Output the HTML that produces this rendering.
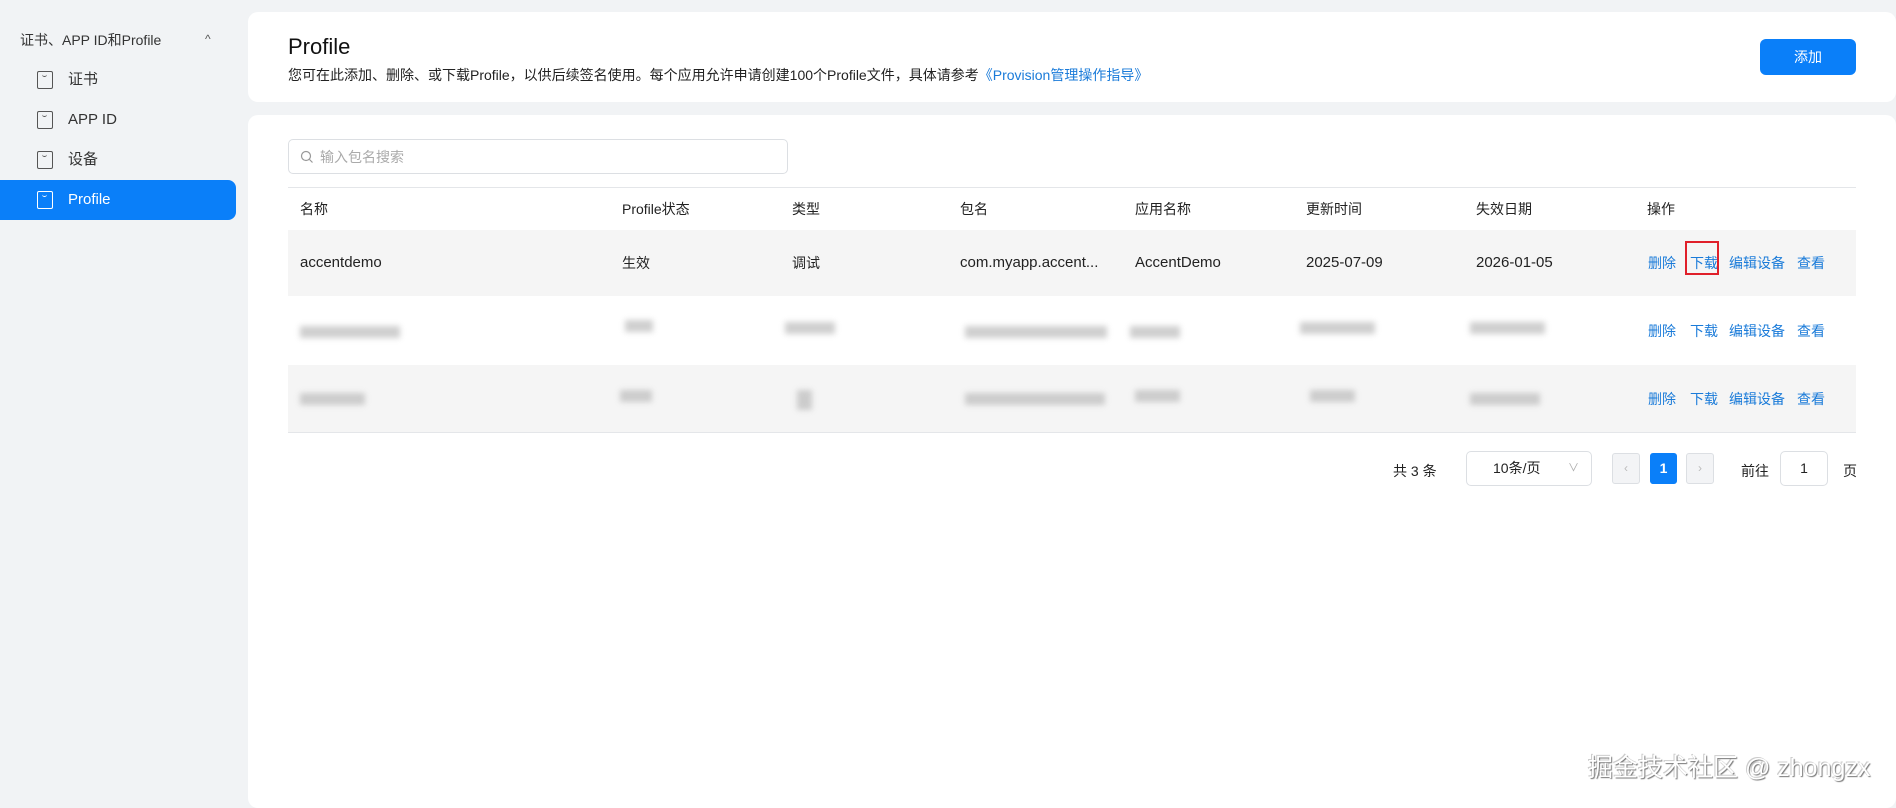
<!DOCTYPE html>
<html><head><meta charset="utf-8"><style>
*{box-sizing:border-box;margin:0;padding:0}
body{width:1896px;height:808px;background:#f1f3f5;font-family:"Liberation Sans","Noto Sans CJK SC",sans-serif;color:#222;position:relative;overflow:hidden}
.sh{position:absolute;left:20px;top:30px;font-size:14px;color:#333}
.caret{position:absolute;left:205px;top:32px;font-size:12px;color:#555}
.it{position:absolute;left:0;width:236px;height:40px;font-size:15px;color:#333}
.it .ic{position:absolute;left:37px;top:11px;width:16px;height:18px;border:1.5px solid #555;border-radius:2px}
.it .ic:after{content:"";position:absolute;left:4px;top:1px;width:5px;height:3px;border-bottom:1.2px solid #555;border-radius:0 0 4px 4px}
.it span{position:absolute;left:68px;top:0;line-height:40px}
.act{background:#0a7ff9;color:#fff;border-radius:0 8px 8px 0}
.act .ic{border-color:#fff}.act .ic:after{border-color:#fff}
.c1{position:absolute;left:248px;top:12px;width:1648px;height:90px;background:#fff;border-radius:10px}
.c2{position:absolute;left:248px;top:115px;width:1648px;height:693px;background:#fff;border-radius:10px}
.a{position:absolute}
.t{position:absolute;font-size:14px;white-space:nowrap;line-height:20px}
.r1{top:253px}.r2{top:321px}.r3{top:389px}
.blue{color:#1a7bd9}
.blur{position:absolute;background:#bbb;filter:blur(3px);opacity:.7;height:12px}
</style></head><body>
<div class="sh">证书、APP ID和Profile</div><div class="caret">^</div>
<div class="it" style="top:60px"><div class="ic"></div><span>证书</span></div>
<div class="it" style="top:100px"><div class="ic"></div><span>APP ID</span></div>
<div class="it" style="top:140px"><div class="ic"></div><span>设备</span></div>
<div class="it act" style="top:180px"><div class="ic"></div><span>Profile</span></div>
<div class="c1"></div><div class="c2"></div>
<div class="t" style="left:288px;top:34px;font-size:22px;line-height:26px;color:#111">Profile</div>
<div class="t" style="left:288px;top:65px;font-size:14px;color:#222">您可在此添加、删除、或下载Profile，以供后续签名使用。每个应用允许申请创建100个Profile文件，具体请参考<span class="blue">《Provision管理操作指导》</span></div>
<div class="a" style="left:1760px;top:39px;width:96px;height:36px;background:#0a7ff9;border-radius:6px;color:#fff;font-size:14px;text-align:center;line-height:36px">添加</div>
<div class="a" style="left:288px;top:139px;width:500px;height:35px;border:1px solid #dcdfe3;border-radius:5px"></div>
<svg class="a" style="left:300px;top:150px" width="14" height="14"><circle cx="6" cy="6" r="4.5" fill="none" stroke="#999" stroke-width="1.2"/><line x1="9.5" y1="9.5" x2="12.5" y2="12.5" stroke="#999" stroke-width="1.2"/></svg>
<div class="t" style="left:320px;top:147px;font-size:14px;color:#aaa">输入包名搜索</div>
<div class="a" style="left:288px;top:187px;width:1568px;height:1px;background:#e4e6e9"></div>
<div class="a" style="left:288px;top:230px;width:1568px;height:66px;background:#f5f5f5"></div>
<div class="a" style="left:288px;top:365px;width:1568px;height:67px;background:#f5f5f5"></div>
<div class="a" style="left:288px;top:432px;width:1568px;height:1px;background:#e4e6e9"></div>
<div class="t" style="left:300px;top:199px">名称</div>
<div class="t" style="left:622px;top:199px">Profile状态</div>
<div class="t" style="left:792px;top:199px">类型</div>
<div class="t" style="left:960px;top:199px">包名</div>
<div class="t" style="left:1135px;top:199px">应用名称</div>
<div class="t" style="left:1306px;top:199px">更新时间</div>
<div class="t" style="left:1476px;top:199px">失效日期</div>
<div class="t" style="left:1647px;top:199px">操作</div>
<div class="t r1" style="left:300px;font-size:15px">accentdemo</div>
<div class="t r1" style="left:622px">生效</div>
<div class="t r1" style="left:792px">调试</div>
<div class="t r1" style="left:960px;font-size:15px">com.myapp.accent...</div>
<div class="t r1" style="left:1135px;font-size:15px">AccentDemo</div>
<div class="t r1" style="left:1306px;font-size:15px">2025-07-09</div>
<div class="t r1" style="left:1476px;font-size:15px">2026-01-05</div>
<div class="t blue r1" style="left:1648px">删除</div>
<div class="t blue r1" style="left:1690px">下载</div>
<div class="a" style="left:1685px;top:241px;width:34px;height:34px;border:2px solid #e0202a"></div>
<div class="t blue r1" style="left:1729px">编辑设备</div>
<div class="t blue r1" style="left:1797px">查看</div>
<div class="t blue r2" style="left:1648px">删除</div><div class="t blue r2" style="left:1690px">下载</div><div class="t blue r2" style="left:1729px">编辑设备</div><div class="t blue r2" style="left:1797px">查看</div>
<div class="t blue r3" style="left:1648px">删除</div><div class="t blue r3" style="left:1690px">下载</div><div class="t blue r3" style="left:1729px">编辑设备</div><div class="t blue r3" style="left:1797px">查看</div>
<div class="blur" style="left:300px;top:326px;width:100px"></div>
<div class="blur" style="left:625px;top:320px;width:28px"></div>
<div class="blur" style="left:785px;top:322px;width:50px"></div>
<div class="blur" style="left:965px;top:326px;width:142px"></div>
<div class="blur" style="left:1130px;top:326px;width:50px"></div>
<div class="blur" style="left:1300px;top:322px;width:75px"></div>
<div class="blur" style="left:1470px;top:322px;width:75px"></div>
<div class="blur" style="left:300px;top:393px;width:65px"></div>
<div class="blur" style="left:620px;top:390px;width:32px"></div>
<div class="blur" style="left:797px;top:390px;width:15px;height:20px"></div>
<div class="blur" style="left:965px;top:393px;width:140px"></div>
<div class="blur" style="left:1135px;top:390px;width:45px"></div>
<div class="blur" style="left:1310px;top:390px;width:45px"></div>
<div class="blur" style="left:1470px;top:393px;width:70px"></div>
<div class="t" style="left:1393px;top:461px">共 3 条</div>
<div class="a" style="left:1466px;top:451px;width:126px;height:35px;border:1px solid #dcdfe3;border-radius:5px;font-size:14px;line-height:33px;padding-left:26px">10条/页<span style="position:absolute;right:12px;color:#aaa;font-size:11px">∨</span></div>
<div class="a" style="left:1612px;top:453px;width:28px;height:31px;border:1px solid #dcdfe3;background:#f3f4f6;border-radius:3px;color:#bbb;font-size:12px;text-align:center;line-height:29px">‹</div>
<div class="a" style="left:1650px;top:453px;width:27px;height:31px;background:#0a7ff9;border-radius:3px;color:#fff;font-weight:bold;font-size:14px;text-align:center;line-height:31px">1</div>
<div class="a" style="left:1686px;top:453px;width:28px;height:31px;border:1px solid #dcdfe3;background:#f3f4f6;border-radius:3px;color:#bbb;font-size:12px;text-align:center;line-height:29px">›</div>
<div class="t" style="left:1741px;top:461px">前往</div>
<div class="a" style="left:1780px;top:451px;width:48px;height:35px;border:1px solid #dcdfe3;border-radius:5px;text-align:center;line-height:33px;font-size:14px">1</div>
<div class="t" style="left:1843px;top:461px">页</div>
<div class="t" style="left:1588px;top:753px;font-size:25px;line-height:30px;color:#fff;text-shadow:1px 1px 1px #777,-1px -1px 0 #ccc">掘金技术社区 @ zhongzx</div>
</body></html>
